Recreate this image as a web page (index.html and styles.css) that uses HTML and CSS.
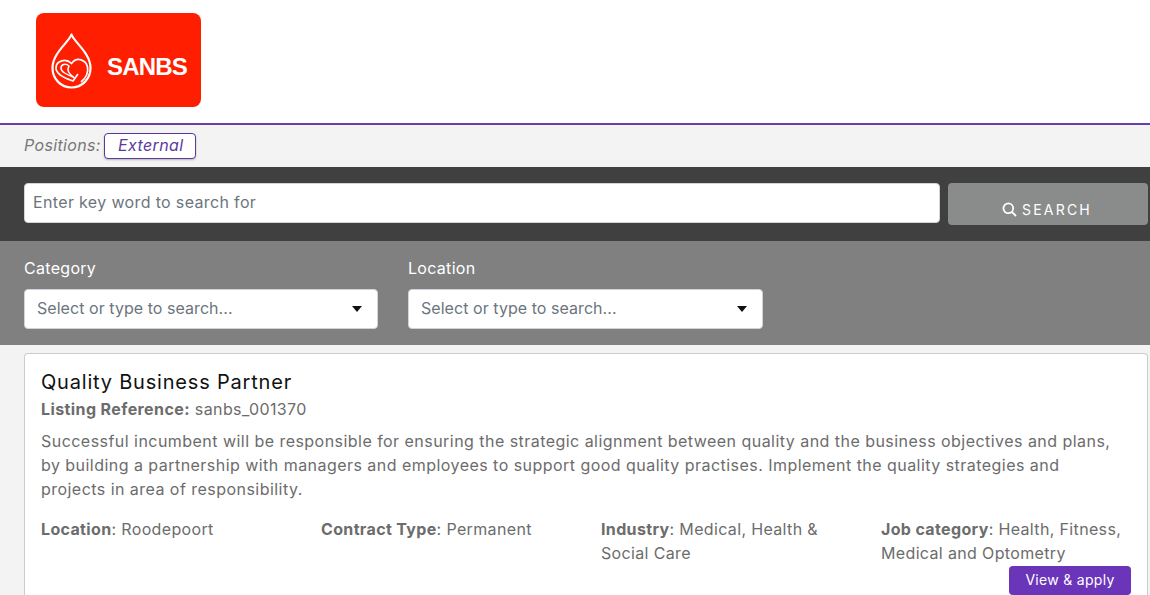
FILE: index.html
```html
<!DOCTYPE html>
<html lang="en">
<head>
<meta charset="UTF-8">
<meta name="viewport" content="width=device-width, initial-scale=1.0">
<title>SANBS Careers</title>
<link rel="stylesheet" href="styles.css">
</head>
<body>
<header class="top">
  <div class="logo">
    <svg class="drop" width="41" height="56" viewBox="0 0 41 56" fill="none" stroke="#fff" stroke-linejoin="round">
      <path stroke-width="2.200" d="M20.500 1.500C18 9 1.500 20 1.500 35C1.500 46 10 54.500 20.500 54.500C31 54.500 39.500 46 39.500 35C39.500 20 23 9 20.500 1.500Z"/>
      <path stroke-width="1.700" d="M30 49C35 45 37.500 40 36.500 34C35 27 26 23 20.500 30.500C15 25 5 27.500 5 35C5 41 13 45 22 48L27 41"/>
      <path stroke-width="1.500" d="M23 44.500C15 41 10 39 10 35C10 31.500 14.500 30 18 33C15.500 37 18 41 23 44.500Z"/>
    </svg>
    <span class="logo-name">SANBS</span>
  </div>
</header>

<div class="positions">
  <span class="positions-label">Positions:</span>
  <button class="tab">External</button>
</div>

<div class="search-bar">
  <input class="search-input" type="text" placeholder="Enter key word to search for">
  <button class="search-btn">
    <svg width="15" height="15" viewBox="0 0 15 15" fill="none" stroke="#fff" stroke-width="1.800">
      <circle cx="6.300" cy="6.300" r="4.900"/>
      <path d="M10 10l4 4"/>
    </svg>
    <span>SEARCH</span>
  </button>
</div>

<div class="filters">
  <div class="filter">
    <label class="filter-label">Category</label>
    <div class="select">
      <span>Select or type to search...</span>
      <i class="caret"></i>
    </div>
  </div>
  <div class="filter">
    <label class="filter-label">Location</label>
    <div class="select">
      <span>Select or type to search...</span>
      <i class="caret"></i>
    </div>
  </div>
</div>

<div class="listing">
  <div class="card">
    <h2 class="job-title">Quality Business Partner</h2>
    <p class="job-ref"><b>Listing Reference:</b> sanbs_001370</p>
    <p class="job-desc">Successful incumbent will be responsible for ensuring the strategic alignment between quality and the business objectives and plans, by building a partnership with managers and employees to support good quality practises. Implement the quality strategies and projects in area of responsibility.</p>
    <div class="job-meta">
      <div><b>Location</b>: Roodepoort</div>
      <div><b>Contract Type</b>: Permanent</div>
      <div><b>Industry</b>: Medical, Health &amp; Social Care</div>
      <div><b>Job category</b>: Health, Fitness, Medical and Optometry</div>
    </div>
    <div class="job-actions">
      <button class="apply">View &amp; apply</button>
    </div>
  </div>
</div>
</body>
</html>
```

FILE: styles.css
```css
* {
  box-sizing: border-box;
}

html, body {
  height: 595px;
  overflow: hidden;
}

body {
  margin: 0;
  background-color: #f3f3f3;
  font-family: "Inter", "Liberation Sans", sans-serif;
  font-size: 16px;
  letter-spacing: 0.460px;
  color: #6c6c6c;
}

.top {
  height: 125px;
  padding: 13px 0 0 36px;
  background-color: #fff;
  border-bottom: 2px solid #6a3fa5;
}

.logo {
  display: flex;
  align-items: flex-start;
  width: 165px;
  height: 94px;
  padding: 20px 0 0 15px;
  background-color: #ff1e00;
  border-radius: 8px;
}

.logo-name {
  margin: 20px 0 0 15px;
  color: #fff;
  font-family: "Liberation Sans", sans-serif;
  font-size: 24px;
  font-weight: bold;
  letter-spacing: -0.800px;
}

.positions {
  display: flex;
  align-items: center;
  height: 42px;
  padding: 0 0 0 24px;
}

.positions-label {
  margin-bottom: 2px;
  font-style: italic;
  font-size: 16px;
  letter-spacing: 0.350px;
  color: #777;
}

.tab {
  width: 92px;
  height: 26px;
  margin-left: 3px;
  padding: 0 0 2px 2px;
  background-color: #fff;
  border: 1px solid #5a3a9e;
  border-radius: 4px;
  box-shadow: 0 1px 2px rgba(0,0,0,0.25);
  color: #5a3a9e;
  font-family: inherit;
  font-size: 16px;
  font-style: italic;
  letter-spacing: 0.400px;
}

.search-bar {
  display: flex;
  align-items: flex-start;
  gap: 8px;
  height: 74px;
  padding: 16px 2px 0 24px;
  background-color: #404040;
}

.search-input {
  flex: 1;
  height: 40px;
  padding: 0 8px 2px;
  background-color: #fff;
  border: 1px solid #ced4da;
  border-radius: 4px;
  font-family: inherit;
  font-size: 16px;
  letter-spacing: 0.350px;
}

.search-input::placeholder {
  color: #6c757d;
  opacity: 1;
}

.search-btn {
  display: flex;
  align-items: center;
  justify-content: center;
  gap: 5px;
  width: 200px;
  height: 42px;
  padding: 10px 2px 0 0;
  background-color: #8a8c8c;
  border: 0;
  border-radius: 4px;
  color: #fff;
  font-family: inherit;
  font-size: 14px;
  letter-spacing: 2.200px;
}

.filters {
  display: grid;
  grid-template-columns: 354px 355px;
  gap: 30px;
  height: 104px;
  padding: 17px 0 0 24px;
  background-color: #808080;
}

.filter-label {
  display: block;
  margin-bottom: 11px;
  color: #fff;
  line-height: 20px;
  letter-spacing: 0.300px;
}

.select {
  display: flex;
  align-items: center;
  justify-content: space-between;
  height: 40px;
  padding: 0 15px 2px 12px;
  background-color: #fff;
  border: 1px solid #ced4da;
  border-radius: 4px;
  color: #6c757d;
  letter-spacing: 0.050px;
}

.caret {
  width: 0;
  height: 0;
  margin-top: 2px;
  border-left: 5px solid transparent;
  border-right: 5px solid transparent;
  border-top: 6px solid #111;
}

.listing {
  padding: 8px 2px 0 24px;
}

.card {
  height: 242px;
  padding: 15px 16px 0;
  background-color: #fff;
  border: 1px solid #ccc;
  border-bottom: 0;
  border-radius: 4px 4px 0 0;
}

.job-title {
  margin: 0;
  color: #111;
  font-size: 20px;
  font-weight: 400;
  line-height: 26px;
  letter-spacing: 0.800px;
}

.job-ref {
  margin: 2px 0 0;
  line-height: 24px;
  letter-spacing: 0.400px;
}

.job-desc {
  margin: 8px 0 0;
  padding-right: 10px;
  line-height: 24px;
}

.job-meta {
  display: grid;
  grid-template-columns: repeat(4, 280px);
  margin-top: 16px;
  line-height: 24px;
  letter-spacing: 0.350px;
}

.job-meta > div {
  padding-right: 15px;
}

.job-actions {
  display: flex;
  justify-content: flex-end;
  margin-top: 1px;
}

.apply {
  width: 122px;
  height: 29px;
  padding: 0 0 2px;
  background-color: #6a35b8;
  border: 0;
  border-radius: 4px;
  color: #fff;
  font-family: inherit;
  font-size: 14px;
  letter-spacing: 0.300px;
}
```
